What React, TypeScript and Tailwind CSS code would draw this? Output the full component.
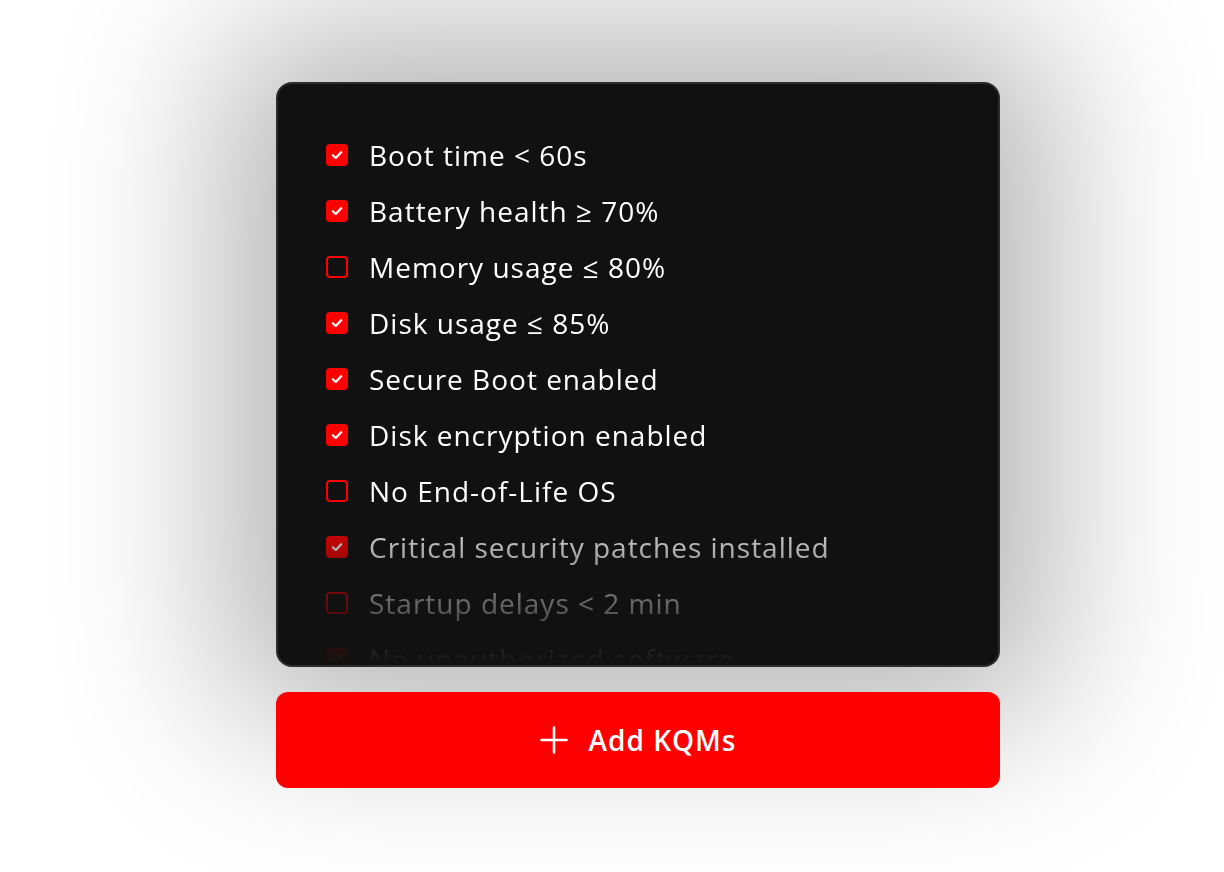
import React from 'react';

const items = [
  { label: 'Boot time < 60s', checked: true },
  { label: 'Battery health ≥ 70%', checked: true },
  { label: 'Memory usage ≤ 80%', checked: false },
  { label: 'Disk usage ≤ 85%', checked: true },
  { label: 'Secure Boot enabled', checked: true },
  { label: 'Disk encryption enabled', checked: true },
  { label: 'No End-of-Life OS', checked: false },
  { label: 'Critical security patches installed', checked: true },
  { label: 'Startup delays < 2 min', checked: false },
  { label: 'No unauthorized software', checked: true },
  { label: 'Antivirus up to date', checked: true },
];

function Check({ checked }: { checked: boolean }) {
  if (checked) {
    return (
      <span className="flex h-[22px] w-[22px] shrink-0 items-center justify-center rounded-[4px] bg-[#ff0000]">
        <svg width="14" height="14" viewBox="0 0 14 14" fill="none">
          <path d="M2.8 7.3 L5.8 10 L11.2 4.2" stroke="white" strokeWidth="2.2" strokeLinecap="round" strokeLinejoin="round" />
        </svg>
      </span>
    );
  }
  return <span className="h-[22px] w-[22px] shrink-0 rounded-[4px] border-2 border-[#ff0000]" />;
}

export default function App() {
  return (
    <div className="min-h-[872px] w-full bg-white pl-[276px] pt-[82px]" style={{ fontFamily: '"Open Sans", Lato, sans-serif' }}>
      <div className="flex w-[724px] flex-col gap-[25px]">
        <div className="h-[585px] overflow-hidden rounded-[16px] border-2 border-[#2c2c2c] bg-[#111111] shadow-[0_0_170px_50px_rgba(0,0,0,0.3)]">
          <div className="flex flex-col gap-[16px] pl-[48px] pt-[51px] [mask-image:linear-gradient(to_bottom,black_410px,transparent_580px)]">
            {items.map(item => (
              <div key={item.label} className="flex h-[40px] items-center gap-[21px]">
                <Check checked={item.checked} />
                <span className="text-[28px] leading-[40px] tracking-[1px] text-white">{item.label}</span>
              </div>
            ))}
          </div>
        </div>
        <button className="flex h-[96px] w-full items-center justify-center gap-[21px] rounded-[12px] bg-[#ff0000] text-[28px] font-semibold tracking-[1px] text-white">
          <svg width="28" height="28" viewBox="0 0 28 28" fill="none">
            <path d="M14 1.5 V26.5 M1.5 14 H26.5" stroke="white" strokeWidth="2.6" strokeLinecap="round" />
          </svg>
          Add KQMs
        </button>
      </div>
    </div>
  );
}
